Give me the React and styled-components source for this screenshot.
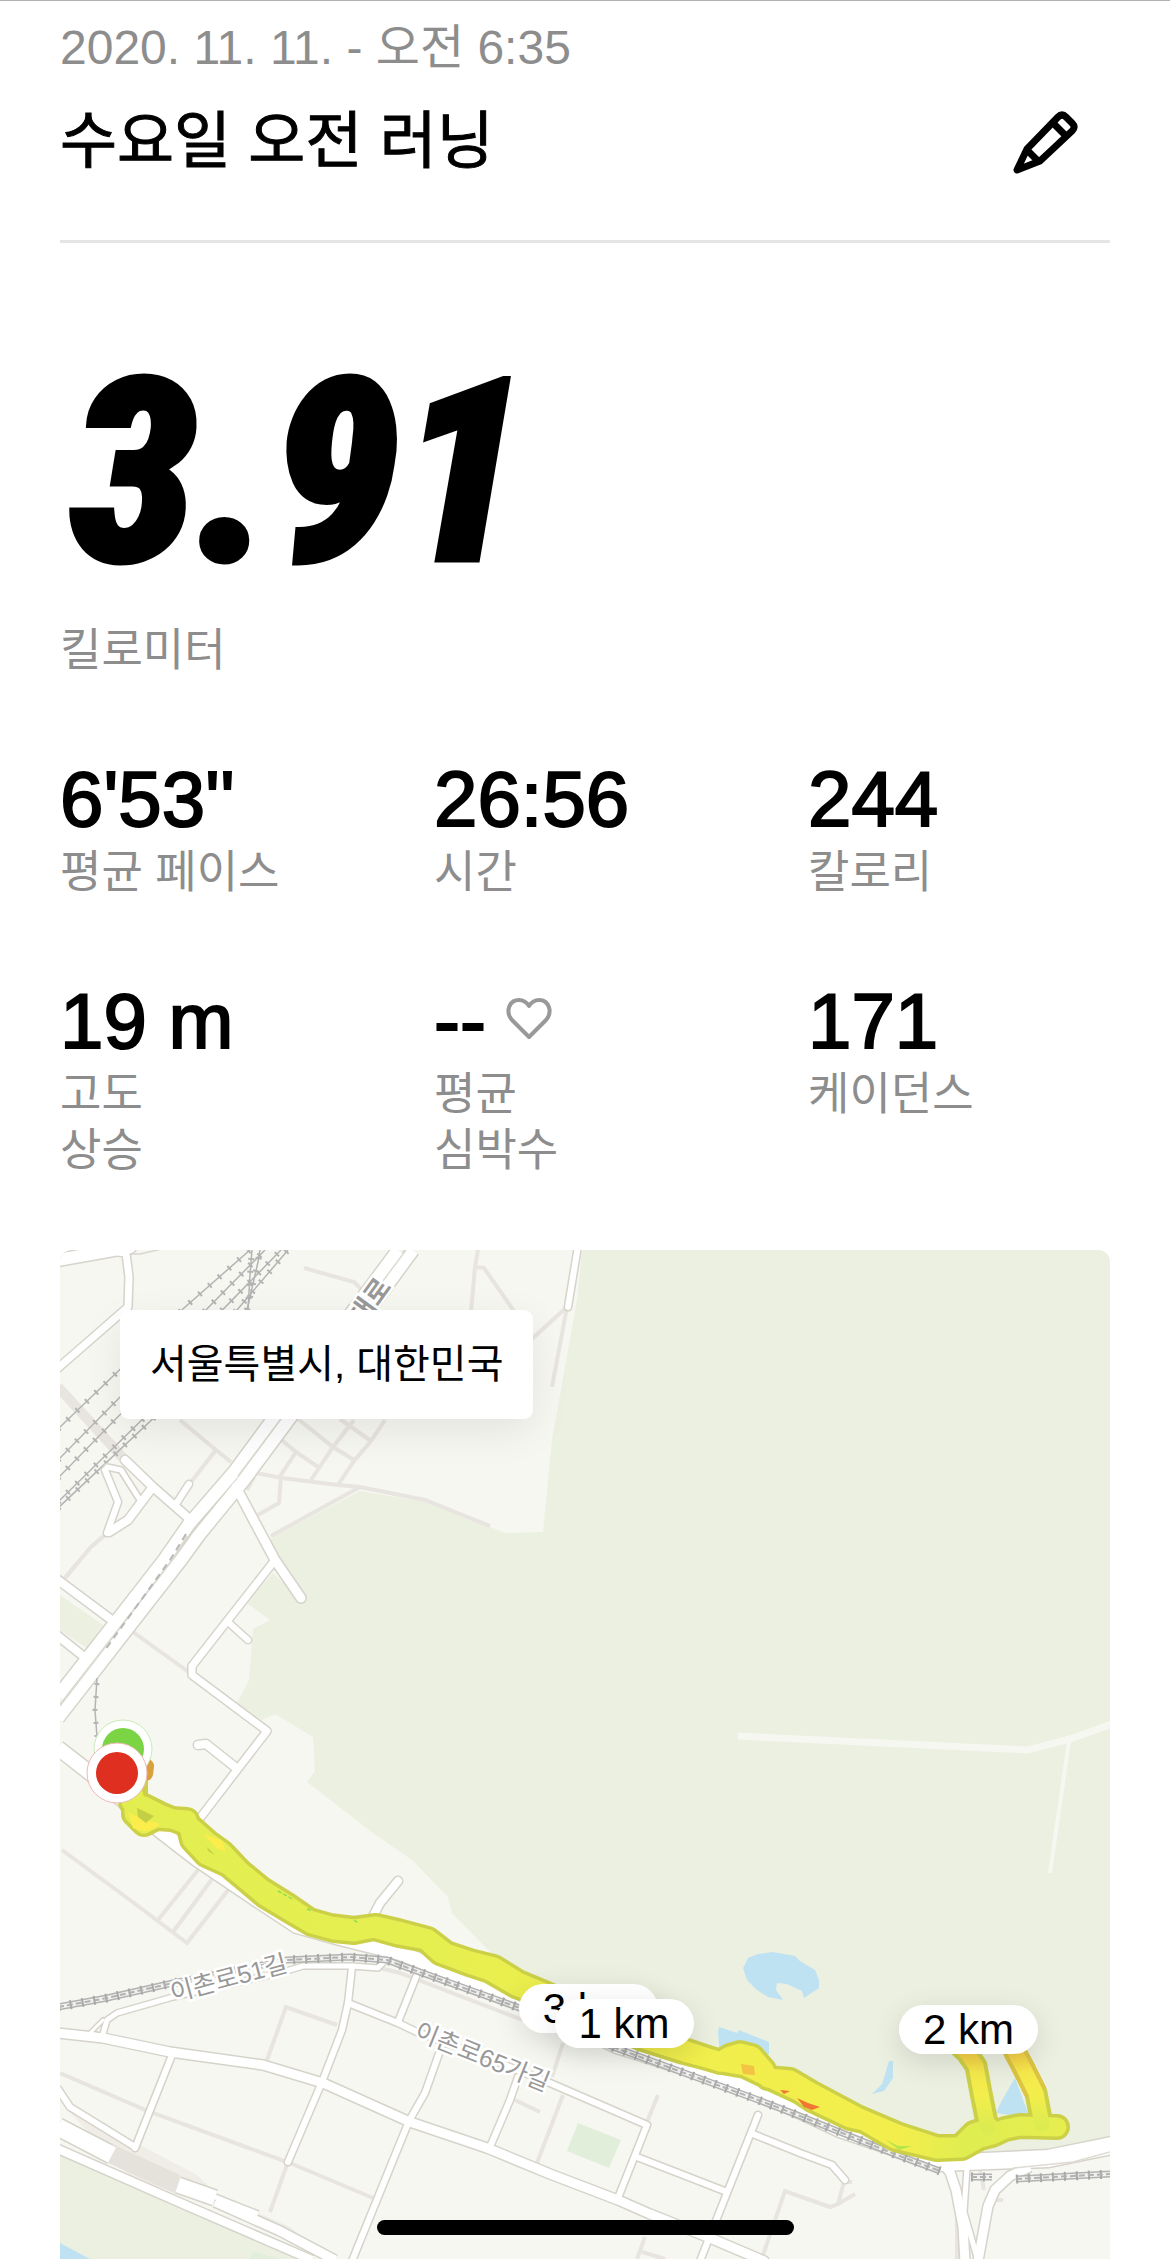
import React from 'react';
import styled, { createGlobalStyle } from 'styled-components';

const GlobalStyle = createGlobalStyle`
  * {
    box-sizing: border-box;
  }

  body {
    margin: 0;
    background: #fff;
    color: #000;
    font-family: "Liberation Sans", "Noto Sans CJK KR", sans-serif;
  }
`;

const Page = styled.main`
  border-top: 1px solid #b0b0b0;
  padding: 19px 60px 0;
`;

const Header = styled.header`
  padding-bottom: 60px;
  border-bottom: 3px solid #e5e5e5;
`;

const DateText = styled.p`
  margin: 0 0 28px;
  font-size: 48px;
  line-height: 56px;
  color: #8d8d8d;
`;

const TitleRow = styled.div`
  display: flex;
  align-items: center;
  justify-content: space-between;
`;

const Title = styled.h1`
  margin: 0;
  font-size: 62px;
  line-height: 76px;
  font-weight: 400;
  -webkit-text-stroke: 1px #000;
`;

const EditButton = styled.button`
  display: flex;
  padding: 0;
  margin-right: 32px;
  border: 0;
  background: none;
  cursor: pointer;
`;

const Distance = styled.section`
  padding: 80px 0;
`;

const DistanceValue = styled.div`
  padding-left: 10px;
  font-family: "Roboto Condensed", "Liberation Sans", sans-serif;
  font-size: 256px;
  line-height: 300px;
  font-weight: 900;
  font-style: italic;
  -webkit-text-stroke: 5px #000;
`;

const Label = styled.div`
  font-size: 45px;
  line-height: 56px;
  color: #8d8d8d;
  white-space: pre-line;
`;

const Stats = styled.section`
  display: grid;
  grid-template-columns: repeat(3, 1fr);
  gap: 80px 72px;
  margin-bottom: 71px;
`;

const StatValue = styled.div`
  display: flex;
  align-items: center;
  gap: 20px;
  margin-bottom: 6px;
  font-size: 78px;
  line-height: 80px;
  -webkit-text-stroke: 2px #000;
`;

const MapCard = styled.section`
  position: relative;
  overflow: hidden;
  border-radius: 12px 12px 0 0;
  background: #f6f7f1;
`;

const MapSvg = styled.svg`
  display: block;
  width: 100%;
  height: auto;
`;

const Place = styled.div`
  position: absolute;
  top: 60px;
  left: 60px;
  padding: 26px 30px 27px;
  border-radius: 9px;
  background: #fff;
  box-shadow: 0 12px 40px rgba(0, 0, 0, 0.08);
  font-size: 40px;
  line-height: 56px;
`;

const Pin = styled.div`
  position: absolute;
  left: ${props => props.$x}%;
  top: ${props => props.$y}%;
  padding: 0 24px;
  border-radius: 25px;
  background: #fff;
  box-shadow: 0 8px 30px rgba(0, 0, 0, 0.12);
  font-size: 42px;
  line-height: 49px;
  white-space: nowrap;
`;

const HomeBar = styled.div`
  position: fixed;
  bottom: 24px;
  left: 50%;
  width: 417px;
  height: 15px;
  margin-left: -208px;
  border-radius: 8px;
  background: #000;
`;

const stats = [
  { value: "6'53''", label: '평균 페이스' },
  { value: '26:56', label: '시간' },
  { value: '244', label: '칼로리' },
  { value: '19 m', label: '고도\n상승' },
  { value: '--', label: '평균\n심박수', heart: true },
  { value: '171', label: '케이던스' },
];

const pins = [
  { text: '3 km', x: 43.7, y: 72.7 },
  { text: '1 km', x: 47.1, y: 74.2 },
  { text: '2 km', x: 79.9, y: 74.8 },
];

// narrow footpaths: [path, width]
const footpaths = [
  ['M304 1268 L354 1282 L363 1291', 4],
  ['M478 1250 L475 1267 L471 1312', 4],
  ['M475 1267 L484 1268 L516 1314', 4],
  ['M567 1307 L533 1338 L520 1352', 4],
  ['M567 1307 L552 1387', 4],
  ['M58 1387 L125 1460', 10],
  ['M180 1420 L216 1450 L231 1462', 4],
  ['M216 1450 L191 1482', 4],
  ['M105 1535 L91 1547 L65 1578', 4],
  ['M278 1437 L296 1452 L318 1467', 4],
  ['M298 1419 L333 1447 L354 1460', 4],
  ['M340 1419 L371 1441', 4],
  ['M385 1420 L371 1441 L354 1461 L338 1485', 4],
  ['M354 1420 L333 1447 L311 1480', 4],
  ['M296 1452 L281 1475 L279 1503 L258 1515', 4],
  ['M247 1490 L256 1473 L282 1478 L338 1485 L360 1487 L425 1500 L490 1526', 4],
  ['M360 1487 L271 1536', 4],
  ['M80 1560 L65 1578', 4],
  ['M133 1632 L190 1673', 4],
  ['M62 1850 L130 1900 L187 1943 L232 1885', 4],
  ['M202 1865 L158 1920', 4],
  ['M215 1875 L173 1932', 4],
  ['M270 1905 L264 1913', 4],
  ['M270 2212 L288 2162', 4],
  ['M267 2060 L286 2007 L337 2025', 4],
  ['M60 2073 L150 2112 L290 2163 L373 2198', 4],
  ['M380 1968 L400 1973 L523 2020', 4],
  ['M563 2043 L552 2077', 4],
  ['M563 2095 L537 2163', 4],
  ['M515 2100 L540 2112', 4],
  ['M658 2095 L647 2122', 4],
  ['M763 2255 L785 2191 L830 2207 L838 2204 L855 2194', 4],
  ['M838 2204 L844 2182 L852 2182', 4],
  ['M645 2237 L637 2259', 4],
  ['M642 2252 L665 2259', 4],
  ['M980 2170 L984 2190', 4],
  ['M993 2200 L1003 2200', 4],
  ['M957 2193 V2259', 4],
];

// streets: [path, width of the white part]
const streets = [
  ['M58 1260 L130 1247', 12],
  ['M118 1252 L126 1253 L129 1277 L128 1307 L58 1368', 7],
  ['M578 1246 L568 1307', 6],
  ['M105 1470 L118 1502 L107 1533', 6],
  ['M107 1467 L121 1470 L140 1500', 5],
  ['M109 1532 L128 1520 L152 1488', 8],
  ['M189 1484 L176 1504', 6],
  ['M125 1460 L153 1487 L193 1522', 8],
  ['M236 1487 L275 1560 L301 1598', 9],
  ['M275 1560 L228 1620 L192 1666 L192 1675 L267 1731 L197 1822', 7],
  ['M228 1622 L248 1640', 6],
  ['M235 1767 L206 1744 L198 1745', 8],
  ['M58 1580 L113 1621', 8],
  ['M58 1636 L83 1656', 8],
  ['M398 1881 L380 1903 L366 1930', 8],
  ['M103 2034 L107 2020 L117 2013 L173 1997 L283 1972 L303 1966 L352 1966 L378 1968 L393 1952', 5],
  ['M103 2036 L90 2033 L103 2020', 3],
  ['M58 2033 L103 2038 L170 2052 L263 2065 L323 2083 L410 2122 L487 2148 L550 2174 L618 2200 L650 2214 L710 2238 L764 2261', 9],
  ['M352 1967 L348 2003 L342 2030 L322 2082 L288 2162', 6],
  ['M172 2055 L135 2148', 6],
  ['M348 2003 L398 2023 L417 2032 L480 2055 L550 2083 L647 2125 L618 2198', 6],
  ['M416 1977 L398 2022', 6],
  ['M442 2045 L425 2093 L409 2121 L352 2261', 6],
  ['M518 2077 L510 2100 L490 2147', 6],
  ['M637 2157 L727 2192', 6],
  ['M758 2115 L727 2193 L700 2261', 6],
  ['M753 2134 L800 2153 L832 2165 L845 2180', 6],
  ['M58 2089 L70 2107 L135 2147', 6],
];

const highways = [
  ['M58 1696 L164 1560 L189 1524 L234 1472 L273 1419 L398 1250', 12],
  ['M58 1718 L181 1560 L199 1535 L244 1480 L287 1422 L413 1250', 12],
  ['M58 1748 L90 1773 L162 1832 L197 1859 L253 1897 L297 1926 L340 1938 L400 1953 L523 2000 L617 2046 L753 2089 L840 2130 L940 2164 L1048 2160 L1112 2147', 14],
  ['M940 2160 L1048 2155 L1112 2142', 10],
  ['M938 2158 L950 2172 L956 2190 L963 2227 L965 2261', 9],
  ['M967 2168 L964 2212 L978 2261', 5],
  ['M1030 2167 L1010 2176 L995 2190 L988 2206 L978 2261', 9],
  ['M58 2127 L112 2155', 17],
  ['M178 2185 L215 2198', 15],
  ['M215 2197 L258 2214', 5],
  ['M215 2202 L280 2231 L335 2260', 9],
  ['M58 2149 L183 2204 L312 2260', 8],
];

const rails = [
  'M58 1429 L184 1308 L250 1250',
  'M58 1460 L265 1250',
  'M58 1478 L281 1250',
  'M58 1502 L150 1412 L288 1250',
  'M58 1508 L160 1412 L248 1310 L250 1275 L252 1250',
  'M247 1310 L258 1262 L260 1250',
];

const doubleRails = [
  'M58 2007 L107 1998 L173 1983 L287 1960 L350 1957 L387 1960 L400 1965 L517 2007 L613 2047 L753 2098 L800 2116 L897 2155 L940 2171',
  'M971 2177 H992 M1016 2179 L1110 2174',
];

// layers of a double railway, from the bottom up: [colour, width, dash]
const railLayers = [
  ['#b2b2b2', 7, 'none'],
  ['#f1f1ee', 4, 'none'],
  ['#a8a8a8', 9, '2 10'],
  ['#b2b2b2', 2, '6 3'],
];

const tracks = [
  'M129 1790 L131 1802 L144 1806 L160 1814 L190 1826 L208 1842 L222 1852 L240 1871 L262 1889 L286 1904 L309 1920 L330 1926 L354 1929 L376 1926 L398 1931 L428 1939 L446 1953 L470 1961 L494 1967 L518 1982 L547 1994 L567 2003 L600 2022 L640 2036 L684 2050 L720 2062 L730 2056 L740 2053 L752 2056 L764 2070 L768 2078 L790 2080 L812 2093 L857 2117 L897 2134 L937 2147 L960 2147 L974 2133 L990 2128',
  'M134 1796 L134 1814 L144 1824 L156 1818 L187 1820 L192 1840 L206 1855 L228 1865 L246 1880 L265 1896 L290 1911 L312 1924 L334 1930 L354 1932 L374 1928 L399 1935 L426 1940 L440 1953 L472 1965 L490 1971 L516 1986 L567 2005 L640 2038 L684 2052 L722 2062 L745 2066 L770 2078 L800 2092 L812 2100 L850 2118 L864 2121 L895 2139 L937 2149 L962 2148 L980 2138 L992 2135 L1005 2129 L1020 2126 L1057 2127',
];
const loopTracks = [
  'M950 2037 L967 2053 L976 2066 L981 2093 L988 2128',
  'M1007 2034 L1015 2052 L1023 2067 L1036 2093 L1042 2124',
];

function PencilIcon() {
  return (
    <svg width="66" height="66" viewBox="0 0 66 66" fill="none" stroke="#000" strokeWidth="7" strokeLinejoin="round">
      <path d="M5 61 L15 40 L46 8 Q50 4 54 8 L60 14 Q64 18 60 22 L28 52 Z" />
      <path d="M40 13 L54 27 M14 40 L27 53" />
    </svg>
  );
}

function HeartIcon() {
  return (
    <svg width="46" height="48" viewBox="0 0 46 48" fill="none" stroke="#999" strokeWidth="4" strokeLinejoin="round">
      <path d="M23 40 L6 23 C-1 15 3 3 13 3 C18 3 21 6 23 9 C25 6 28 3 33 3 C43 3 47 15 40 23 Z" />
    </svg>
  );
}

function RouteMap() {
  return (
    <MapSvg viewBox="60 1250 1050 1009" role="img" aria-label="route map">
      <defs>
        <linearGradient id="pace" gradientUnits="userSpaceOnUse" x1="120" y1="0" x2="1060" y2="0">
          <stop offset="0" stopColor="#e2ee50" />
          <stop offset="0.35" stopColor="#e6ef50" />
          <stop offset="0.5" stopColor="#efef4c" />
          <stop offset="0.83" stopColor="#f3ee4c" />
          <stop offset="0.9" stopColor="#dfed50" />
          <stop offset="1" stopColor="#e6ee4f" />
        </linearGradient>
        <linearGradient id="loop" gradientUnits="userSpaceOnUse" x1="0" y1="2048" x2="0" y2="2128">
          <stop offset="0" stopColor="#f5c545" />
          <stop offset="0.3" stopColor="#f6ea4c" />
          <stop offset="0.6" stopColor="#f2ee4c" />
          <stop offset="1" stopColor="#dbeb50" />
        </linearGradient>
      </defs>

      <path fill="#f6f7f1" d="M60 1250 H1110 V2259 H60 Z" />
      <path
        fill="#ebf0e1"
        d="M582 1250 L577 1300 L552 1440 L543 1532 L505 1533 L490 1527 L425 1502 L360 1491 L271 1538 L276 1560 L301 1600 L273 1573 L247 1603 L270 1620 L253 1629 L249 1680 L237 1703 L262 1720 L275 1714 L313 1737 L315 1771 L307 1782 L373 1833 L412 1860 L448 1897 L452 1913 L490 1952 L550 1988 L700 2045 L800 2085 L940 2152 L1048 2151 L1110 2136 V1250 Z"
      />
      <path fill="#ebf0e1" d="M60 1595 L103 1625 L87 1648 L60 1630 Z" />
      <path fill="#ebf0e1" d="M60 2153 L183 2208 L313 2259 H60 Z" />
      <path fill="#bfe2f3" d="M60 2243 L90 2259 H60 Z" />
      <path fill="#e0eeda" d="M253 2252 L280 2259 H250 Z M578 2123 L621 2140 L609 2168 L567 2151 Z" />
      <path
        fill="#bfe2f3"
        d="M743 1968 L748 1958 L758 1954 L773 1952 L795 1956 L800 1961 L815 1970 L819 1980 V1988 L804 1998 L802 1991 L787 1984 L777 1983 L776 1990 L783 2000 L768 1997 L757 1990 L747 1980 Z M719 2027 L737 2033 L739 2030 L769 2042 V2054 L720 2056 L718 2033 Z M889 2061 H893 V2078 L884 2091 L872 2094 L882 2084 Z M1015 2078 L1030 2118 L996 2113 L1002 2100 Z"
      />
      <path fill="none" stroke="#f6f7f1" strokeWidth="7" d="M738 1736 L1028 1750 L1070 1739 L1112 1724" />
      <path fill="none" stroke="#f6f7f1" strokeWidth="4" d="M1069 1741 L1050 1873" />

      <path fill="#efede6" d="M66 2108 L112 2135 L140 2145 L197 2175 L218 2195 L290 2227 L308 2242 L250 2216 L130 2178 Z" />
      <g fill="none" stroke="#e8e4df">
        {footpaths.map(([d, w]) => <path key={d} d={d} strokeWidth={w} />)}
      </g>

      {rails.map(d => (
        <g key={d} fill="none" stroke="#b4b4b4">
          <path d={d} strokeWidth="1.5" />
          <path d={d} strokeWidth="6" strokeDasharray="2 11" />
        </g>
      ))}
      <path fill="none" stroke="#d9d6cd" strokeWidth="1.5" d="M127 1254 L140 1254 L162 1249" />

      <g fill="none" stroke="#d6d3ca" strokeLinecap="round" strokeLinejoin="round">
        {streets.map(([d, w]) => <path key={d} d={d} strokeWidth={w + 3} />)}
      </g>
      <g fill="none" stroke="#d6d3ca">
        {highways.map(([d, w]) => <path key={d} d={d} strokeWidth={w + 3} />)}
      </g>
      <path fill="#e5e2dc" d="M112 2144 L180 2175 L176 2194 L106 2162 Z" />
      <g fill="none" stroke="#fff" strokeLinecap="round" strokeLinejoin="round">
        {streets.map(([d, w]) => <path key={d} d={d} strokeWidth={w} />)}
      </g>
      <g fill="none" stroke="#fff">
        {highways.map(([d, w]) => <path key={d} d={d} strokeWidth={w} />)}
      </g>
      <path fill="none" stroke="#dedbd3" strokeWidth="1.5" d="M60 1706 L172 1560 L187 1536 M238 1476 L280 1420 L406 1250 M1013 2168 L1073 2162 L1110 2152 M523 1993 L700 2058 L800 2098" />
      <path fill="none" stroke="#b8b8b8" strokeWidth="2" strokeDasharray="7 5" d="M186 1534 L170 1560 L105 1650" />
      <g fill="none" stroke="#b4b4b4">
        <path strokeWidth="1.5" d="M97 1678 L95 1710 L97 1737" />
        <path strokeWidth="5" strokeDasharray="2 11" d="M97 1683 L95 1710 L97 1737" />
      </g>

      {doubleRails.map(d => (
        <g key={d} fill="none">
          {railLayers.map(([color, w, dash]) => (
            <path key={w} stroke={color} strokeWidth={w} strokeDasharray={dash} d={d} />
          ))}
        </g>
      ))}

      <g
        fill="#999"
        stroke="#fff"
        strokeWidth="5"
        paintOrder="stroke"
        fontFamily='"Liberation Sans", "Noto Sans CJK KR", sans-serif'
        fontSize="25"
      >
        <text transform="translate(173 2002) rotate(-15)">이촌로51길</text>
        <text transform="translate(413 2038) rotate(22)">이촌로65가길</text>
        <text transform="translate(363 1327) rotate(-54)" fontSize="27" fontWeight="700">대로</text>
      </g>

      <path fill="none" stroke="#d9a03c" strokeWidth="14" strokeLinecap="round" d="M147 1766 L146 1774" />
      <g fill="none" stroke="#ccd047" strokeLinecap="round" strokeLinejoin="round">
        {tracks.map(d => <path key={d} d={d} strokeWidth="26" />)}
        {loopTracks.map(d => <path key={d} d={d} strokeWidth="23" />)}
      </g>
      <path fill="none" stroke="#dcc444" strokeWidth="23" d="M1007 2034 L1015 2052 L1023 2067 L1036 2093" />
      <path fill="none" stroke="#ccd047" strokeWidth="16" d="M140 1780 V1800" />
      <g fill="none" stroke="url(#pace)" strokeWidth="19" strokeLinecap="round" strokeLinejoin="round">
        {tracks.map(d => <path key={d} d={d} />)}
      </g>
      <g fill="none" stroke="url(#loop)" strokeWidth="15" strokeLinecap="round" strokeLinejoin="round">
        {loopTracks.map(d => <path key={d} d={d} />)}
      </g>
      <path fill="#faed4c" d="M128 1812 Q138 1818 160 1824 Q148 1836 133 1828 Z M203 1834 L222 1840 L226 1852 L216 1848 Z" />
      <path fill="#c3cf45" d="M137 1808 L154 1816 L146 1823 L138 1817 Z M207 1847 L215 1855 L208 1851 Z" />
      <path fill="#f4c244" d="M741 2064 L754 2066 L755 2075 L743 2074 Z" />
      <path fill="#ef7732" d="M780 2090 L790 2091 L784 2094 Z M797 2098 L804 2107 L812 2110 L820 2107 L808 2103 Z" />
      <path fill="#b5e44d" d="M885 2139 L898 2146 L912 2146 L899 2150 Z" />
      <path fill="none" stroke="#8ade52" strokeWidth="1.5" strokeDasharray="4 2" d="M278 1891 L294 1900 M307 1909 L312 1911 M354 1920 L358 1923" />

      <circle cx="123" cy="1749" r="29" fill="#fff" stroke="#c9ecb9" />
      <circle cx="123" cy="1749" r="21" fill="#7ad444" />
      <circle cx="117" cy="1773" r="30" fill="#fff" stroke="#f0b8b4" />
      <circle cx="117" cy="1773" r="21" fill="#de2f21" />
    </MapSvg>
  );
}

export default function App() {
  return (
    <>
      <GlobalStyle />
      <Page>
        <Header>
          <DateText>2020. 11. 11. - 오전 6:35</DateText>
          <TitleRow>
            <Title>수요일 오전 러닝</Title>
            <EditButton type="button" aria-label="edit">
              <PencilIcon />
            </EditButton>
          </TitleRow>
        </Header>

        <Distance>
          <DistanceValue>3.91</DistanceValue>
          <Label>킬로미터</Label>
        </Distance>

        <Stats>
          {stats.map(stat => (
            <div key={stat.label}>
              <StatValue>
                {stat.value}
                {stat.heart && <HeartIcon />}
              </StatValue>
              <Label>{stat.label}</Label>
            </div>
          ))}
        </Stats>

        <MapCard>
          <RouteMap />
          <Place>서울특별시, 대한민국</Place>
          {pins.map(pin => (
            <Pin key={pin.text} $x={pin.x} $y={pin.y}>{pin.text}</Pin>
          ))}
        </MapCard>
      </Page>
      <HomeBar />
    </>
  );
}
